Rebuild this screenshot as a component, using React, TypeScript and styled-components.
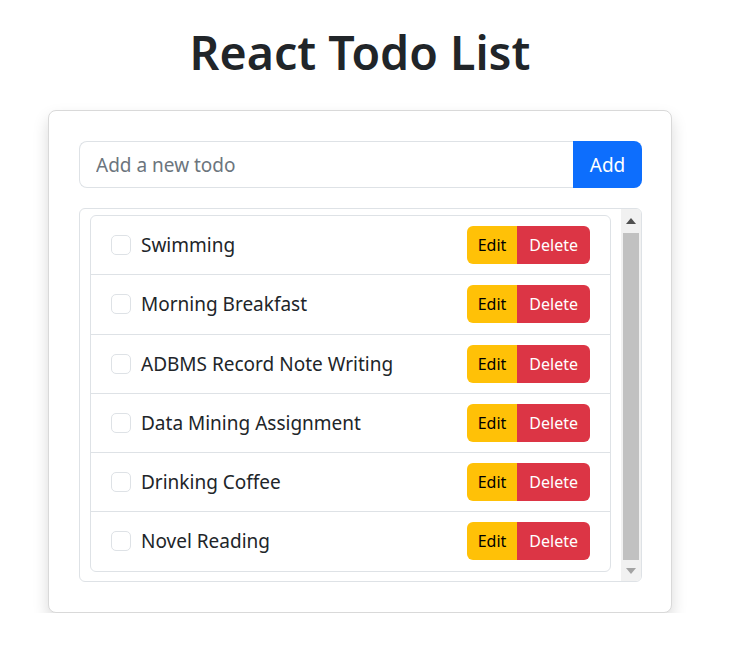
import React from "react";
import styled, { createGlobalStyle } from "styled-components";

const Global = createGlobalStyle`
  html, body { margin: 0; padding: 0; background: #fff; }
  body { font-family: "Noto Sans", "Open Sans", sans-serif; color: #212529; }
  * { box-sizing: border-box; }
`;

const Page = styled.div`
  width: 624px;
  margin-left: 48px;
  padding-top: 22px;
`;

const Title = styled.h1`
  margin: 0 0 27px 0;
  text-align: center;
  font-size: 46.5px;
  font-weight: 600;
  line-height: 61px;
  color: #212529;
`;

const Card = styled.div`
  background: #fff;
  border: 1px solid #d9d9d9;
  border-radius: 8px;
  box-shadow: 0 8px 16px rgba(0, 0, 0, 0.15);
  padding: 30px 29px 30px 30px;
`;

const InputGroup = styled.div`
  display: flex;
  height: 47px;
  margin-bottom: 20px;
`;

const Input = styled.input`
  flex: 1;
  min-width: 0;
  border: 1px solid #dee2e6;
  border-right: none;
  border-radius: 8px 0 0 8px;
  padding: 0 16px;
  font-family: inherit;
  font-size: 19px;
  color: #212529;
  outline: none;
  &::placeholder { color: #6c757d; }
`;

const AddButton = styled.button`
  width: 69px;
  border: none;
  border-radius: 0 8px 8px 0;
  background: #0d6efd;
  color: #fff;
  font-family: inherit;
  font-size: 19px;
`;

const ListBox = styled.div`
  display: flex;
  border: 1px solid #dee2e6;
  border-radius: 6px;
  height: 374px;
  overflow: hidden;
`;

const Scroller = styled.div`
  flex: 1;
  min-width: 0;
  overflow: hidden;
  padding: 6px 10px 10px 10px;
`;

const ScrollBar = styled.div`
  width: 20px;
  flex: none;
  display: flex;
  flex-direction: column;
  background: #f1f1f1;
`;

const ArrowButton = styled.div<{ $h: number }>`
  height: ${(p) => p.$h}px;
  flex: none;
  display: flex;
  align-items: center;
  justify-content: center;
`;

const Thumb = styled.div`
  flex: 1;
  margin: 0 2px;
  background: #c1c1c1;
`;

const List = styled.ul`
  list-style: none;
  margin: 0;
  padding: 0;
  border: 1px solid #dee2e6;
  border-radius: 6px;
`;

const Item = styled.li`
  display: flex;
  align-items: center;
  padding: 10px 20px 10.3px 20px;
  & + & { border-top: 1px solid #dee2e6; }
`;

const Check = styled.span`
  width: 20px;
  height: 20px;
  border: 1px solid #dee2e6;
  border-radius: 5px;
  margin-right: 10px;
  flex: none;
`;

const Label = styled.span`
  flex: 1;
  font-size: 19px;
  color: #212529;
`;

const BtnGroup = styled.div`
  display: flex;
  border-radius: 6px;
  overflow: hidden;
`;

const Btn = styled.button<{ $variant: "warning" | "danger" }>`
  height: 38px;
  border: none;
  padding: 0 ${(p) => (p.$variant === "warning" ? 11 : 12)}px;
  font-family: inherit;
  font-size: 16px;
  background: ${(p) => (p.$variant === "warning" ? "#ffc107" : "#dc3545")};
  color: ${(p) => (p.$variant === "warning" ? "#000" : "#fff")};
`;

const todos = [
  "Swimming",
  "Morning Breakfast",
  "ADBMS Record Note Writing",
  "Data Mining Assignment",
  "Drinking Coffee",
  "Novel Reading",
];

export default function App() {
  return (
    <>
      <Global />
      <Page>
        <Title>React Todo List</Title>
        <Card>
          <InputGroup>
            <Input placeholder="Add a new todo" />
            <AddButton>Add</AddButton>
          </InputGroup>
          <ListBox>
            <Scroller>
              <List>
                {todos.map((t) => (
                  <Item key={t}>
                    <Check />
                    <Label>{t}</Label>
                    <BtnGroup>
                      <Btn $variant="warning">Edit</Btn>
                      <Btn $variant="danger">Delete</Btn>
                    </BtnGroup>
                  </Item>
                ))}
              </List>
            </Scroller>
            <ScrollBar>
              <ArrowButton $h={24}>
                <svg width="10" height="6" viewBox="0 0 10 6">
                  <polygon points="0,6 10,6 5,0" fill="#505050" />
                </svg>
              </ArrowButton>
              <Thumb />
              <ArrowButton $h={21}>
                <svg width="10" height="6" viewBox="0 0 10 6">
                  <polygon points="0,0 10,0 5,6" fill="#a3a3a3" />
                </svg>
              </ArrowButton>
            </ScrollBar>
          </ListBox>
        </Card>
      </Page>
    </>
  );
}
